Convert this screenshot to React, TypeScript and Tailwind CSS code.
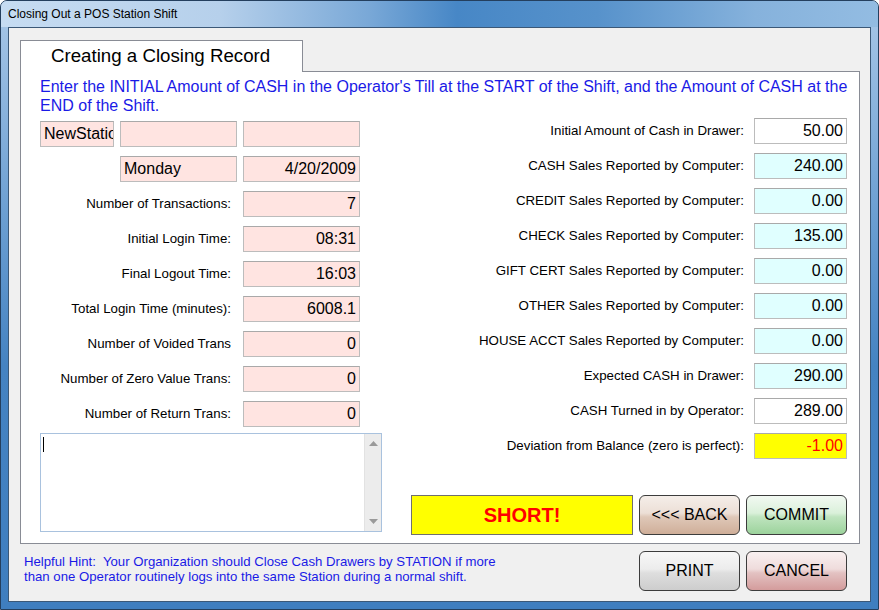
// Closing Out a POS Station Shift - closing record dialog

type Tone = 'pink' | 'cyan' | 'white' | 'yellow'

const toneClass: Record<Tone, string> = {
  pink: 'bg-[#ffe4e1] text-black',
  cyan: 'bg-[#e0ffff] text-black',
  white: 'bg-white text-black',
  yellow: 'bg-[#ffff00] text-[#ff0000]',
}

function Field({ value, tone, left }: { value: string; tone: Tone; left?: boolean }) {
  return (
    <div
      className={`h-[26px] border border-[#bcbcbc] border-t-[#a9a9a9] flex items-center text-[16px] overflow-hidden whitespace-nowrap ${toneClass[tone]} ${
        left ? 'justify-start pl-[3px]' : 'justify-end pr-[3px]'
      }`}
    >
      {value}
    </div>
  )
}

const leftRows = [
  { label: 'Number of Transactions:', value: '7' },
  { label: 'Initial Login Time:', value: '08:31' },
  { label: 'Final Logout Time:', value: '16:03' },
  { label: 'Total Login Time (minutes):', value: '6008.1' },
  { label: 'Number of Voided Trans', value: '0' },
  { label: 'Number of Zero Value Trans:', value: '0' },
  { label: 'Number of Return Trans:', value: '0' },
]

const rightRows: { label: string; value: string; tone: Tone }[] = [
  { label: 'Initial Amount of Cash in Drawer:', value: '50.00', tone: 'white' },
  { label: 'CASH Sales Reported by Computer:', value: '240.00', tone: 'cyan' },
  { label: 'CREDIT Sales Reported by Computer:', value: '0.00', tone: 'cyan' },
  { label: 'CHECK Sales Reported by Computer:', value: '135.00', tone: 'cyan' },
  { label: 'GIFT CERT Sales Reported by Computer:', value: '0.00', tone: 'cyan' },
  { label: 'OTHER Sales Reported by Computer:', value: '0.00', tone: 'cyan' },
  { label: 'HOUSE ACCT Sales Reported by Computer:', value: '0.00', tone: 'cyan' },
  { label: 'Expected CASH in Drawer:', value: '290.00', tone: 'cyan' },
  { label: 'CASH Turned in by Operator:', value: '289.00', tone: 'white' },
  { label: 'Deviation from Balance (zero is perfect):', value: '-1.00', tone: 'yellow' },
]

const buttonTone = {
  back: 'bg-[linear-gradient(to_bottom,#f5eee9_0%,#ecdfd6_45%,#dfc8b8_55%,#cfae99_100%)]',
  commit: 'bg-[linear-gradient(to_bottom,#f2f9f2_0%,#daf0da_45%,#bfe4bf_55%,#9cd39c_100%)]',
  print: 'bg-[linear-gradient(to_bottom,#f7f7f7_0%,#ececec_45%,#dedede_55%,#cdcdcd_100%)]',
  cancel: 'bg-[linear-gradient(to_bottom,#f9f0f0_0%,#efdcdc_45%,#e3c2c2_55%,#d49c9c_100%)]',
}

function Button({ label, tone }: { label: string; tone: keyof typeof buttonTone }) {
  return (
    <button
      className={`w-[101px] h-[40px] rounded-[6px] border border-[#3c3c3c] text-[16px] text-black flex items-center justify-center ${buttonTone[tone]}`}
    >
      {label}
    </button>
  )
}

function NotesBox() {
  return (
    <div className="mt-[6px] w-[342px] h-[99px] border border-[#a9c2de] bg-white flex">
      <div className="flex-1 pl-[2px] pt-[3px]">
        <div className="w-px h-[15px] bg-black" />
      </div>
      {/* scrollbar */}
      <div className="w-[17px] bg-[#ececec] border-l border-[#e2e2e2] flex flex-col justify-between items-center py-[7px]">
        <svg width="9" height="5" viewBox="0 0 9 5">
          <path d="M0 5 L4.5 0 L9 5 Z" fill="#9a9a9a" />
        </svg>
        <svg width="9" height="5" viewBox="0 0 9 5">
          <path d="M0 0 L4.5 5 L9 0 Z" fill="#9a9a9a" />
        </svg>
      </div>
    </div>
  )
}

export default function App() {
  return (
    <div className="w-[879px] h-[610px] flex flex-col rounded-t-[7px] border border-[#243f5e] overflow-hidden bg-[linear-gradient(to_bottom,#a9c8e8_0%,#6c9fd2_35%,#4583c2_60%,#3f7ebf_100%)] font-['Liberation_Sans',Arial,sans-serif]">
      {/* Title bar */}
      <div className="h-[26px] shrink-0 flex items-center pl-[7px] text-[12px] text-black bg-[linear-gradient(to_right,#c6dcf2_0%,#b6d0eb_25%,#79a8d7_42%,#4787c6_52%,#5792cb_68%,#86b2dc_86%,#93bce2_100%)]">
        Closing Out a POS Station Shift
      </div>

      {/* Client area */}
      <div className="flex-1 mx-[7px] mb-[7px] border border-[#3b5877] bg-[#f0f0f0] pl-[11px] pr-[10px] pt-[12px]">
        {/* Tab */}
        <div className="relative z-10 -mb-px w-[283px] h-[32px] border border-b-0 border-[#898c95] bg-white pl-[30px] flex items-center text-[18.7px] text-black">
          Creating a Closing Record
        </div>

        {/* Panel */}
        <div className="border border-[#898c95] bg-white pl-[19px] pr-[12px] pt-[5px] pb-[8px]">
          <p className="text-[16px] leading-[19px] text-[#1a1ae6] whitespace-nowrap">
            Enter the INITIAL Amount of CASH in the Operator's Till at the START of the Shift, and the Amount of CASH at the
            <br />
            END of the Shift.
          </p>

          <div className="mt-[3px] flex">
            {/* Left column */}
            <div className="w-[342px] pt-[3px]">
              <div className="grid grid-cols-[74px_117px_117px] gap-x-[6px] gap-y-[9px] items-center">
                <Field value="NewStation" tone="pink" left />
                <Field value="" tone="pink" />
                <Field value="" tone="pink" />

                <div />
                <Field value="Monday" tone="pink" left />
                <Field value="4/20/2009" tone="pink" />

                {leftRows.map((row) => (
                  <div key={row.label} className="contents">
                    <div className="col-span-2 text-right pr-[6px] text-[13.3px] text-black whitespace-nowrap">
                      {row.label}
                    </div>
                    <Field value={row.value} tone="pink" />
                  </div>
                ))}
              </div>
              <NotesBox />
            </div>

            {/* Right column */}
            <div className="flex-1 flex flex-col items-end">
              <div className="flex flex-col gap-[9px]">
                {rightRows.map((row) => (
                  <div key={row.label} className="flex items-center justify-end gap-[10px]">
                    <span className="text-[13.3px] text-black whitespace-nowrap">{row.label}</span>
                    <div className="w-[93px]">
                      <Field value={row.value} tone={row.tone} />
                    </div>
                  </div>
                ))}
              </div>

              <div className="mt-[36px] flex gap-[6px]">
                <div className="w-[222px] h-[40px] border border-[#6f6f6f] bg-[#ffff00] flex items-center justify-center text-[20px] font-bold text-[#ff0000]">
                  SHORT!
                </div>
                <Button label="<<< BACK" tone="back" />
                <Button label="COMMIT" tone="commit" />
              </div>
            </div>
          </div>
        </div>

        {/* Footer: hint + buttons */}
        <div className="mt-[7px] flex justify-between items-start">
          <p className="pl-[4px] pt-[3px] text-[13.2px] leading-[15.3px] text-[#1a1ae6]">
            Helpful Hint:&nbsp; Your Organization should Close Cash Drawers by STATION if more
            <br />
            than one Operator routinely logs into the same Station during a normal shift.
          </p>
          <div className="mr-[13px] flex gap-[6px]">
            <Button label="PRINT" tone="print" />
            <Button label="CANCEL" tone="cancel" />
          </div>
        </div>
      </div>
    </div>
  )
}
